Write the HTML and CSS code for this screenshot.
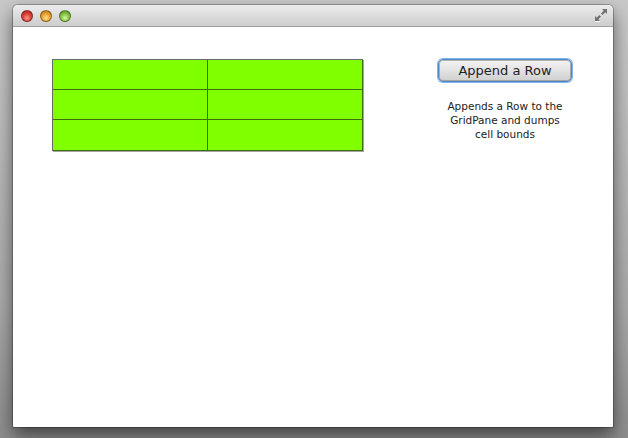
FILE: index.html
```html
<!DOCTYPE html>
<html>
<head>
<meta charset="utf-8">
<link rel="stylesheet" href="styles.css">
</head>
<body>
<div class="window">
  <div class="titlebar">
    <div class="lights">
      <span class="light red"></span>
      <span class="light yellow"></span>
      <span class="light green"></span>
    </div>
    <svg class="resize" width="14" height="14" viewBox="0 0 14 14">
      <path d="M8 1 H13 V6 L11.3 4.3 L8.6 7 L7 5.4 L9.7 2.7 Z" fill="#707070"/>
      <path d="M6 13 H1 V8 L2.7 9.7 L5.4 7 L7 8.6 L4.3 11.3 Z" fill="#707070"/>
      <line x1="1" y1="13.5" x2="6" y2="13.5" stroke="#fff" stroke-width="1"/>
    </svg>
  </div>
  <div class="content">
    <div class="grid">
      <div class="cell"></div><div class="cell"></div>
      <div class="cell"></div><div class="cell"></div>
      <div class="cell"></div><div class="cell"></div>
    </div>
    <div class="side">
      <button class="btn">Append a Row</button>
      <p class="desc">Appends a Row to the GridPane and dumps cell bounds</p>
    </div>
  </div>
</div>
</body>
</html>
```

FILE: styles.css
```css
html, body {
  margin: 0;
  padding: 0;
}
body {
  width: 628px;
  height: 438px;
  overflow: hidden;
  background: linear-gradient(180deg, #c9c9c9 0%, #a9a9a9 70%, #8c8c8c 100%);
  font-family: "DejaVu Sans", "Liberation Sans", sans-serif;
  padding-top: 5px;
  box-sizing: border-box;
}
.window {
  margin-left: 13px;
  width: 600px;
  height: 422px;
  background: #fff;
  border-radius: 5px 5px 1px 1px;
  box-shadow: 0 8px 18px rgba(0, 0, 0, 0.55), 0 0 0 1px rgba(0, 0, 0, 0.25);
  overflow: hidden;
}
.titlebar {
  height: 22px;
  background: linear-gradient(180deg, #ececec 0%, #dcdcdc 50%, #cdcdcd 100%);
  border-bottom: 1px solid #a0a0a0;
  display: flex;
  align-items: center;
  justify-content: space-between;
  padding: 0 5px 0 8px;
  box-sizing: border-box;
}
.lights {
  display: flex;
  gap: 7px;
}
.light {
  width: 12px;
  height: 12px;
  border-radius: 50%;
  box-sizing: border-box;
  border: 1px solid rgba(0, 0, 0, 0.35);
}
.red {
  background: radial-gradient(circle at 50% 70%, #ff9a8a 0%, #e0443a 45%, #a8201a 100%);
}
.yellow {
  background: radial-gradient(circle at 50% 70%, #ffe48a 0%, #e8a534 45%, #b06e10 100%);
}
.green {
  background: radial-gradient(circle at 50% 70%, #d6f5a0 0%, #8cc64c 45%, #4f8a22 100%);
}
.resize {
  margin-top: -2px;
}
.content {
  display: flex;
  align-items: flex-start;
  padding: 32px 0 0 39px;
}
.grid {
  display: grid;
  grid-template-columns: 155px 155px;
  grid-template-rows: 30px 30px 31px;
  border-left: 1px solid #6a6a6a;
  border-top: 1px solid #6a6a6a;
  background: #7fff00;
  box-shadow: 1px 1px 0 rgba(0, 0, 0, 0.35);
}
.cell {
  border-right: 1px solid #3d6e10;
  border-bottom: 1px solid #3d6e10;
  box-sizing: border-box;
  background: #7fff00;
}
.side {
  margin-left: 75px;
  width: 134px;
  display: flex;
  flex-direction: column;
  align-items: center;
}
.btn {
  width: 134px;
  height: 23px;
  margin: 0;
  padding: 0;
  font-family: "DejaVu Sans", "Liberation Sans", sans-serif;
  font-size: 13px;
  color: #222;
  border: 1px solid #4f86c6;
  border-radius: 5px;
  background: linear-gradient(180deg, #f4f4f4 0%, #e2e2e2 50%, #cfcfcf 100%);
  box-shadow: 0 0 0 1px #7fb6ea, inset 0 0 0 1px rgba(120, 120, 120, 0.5);
}
.desc {
  margin: 17px 0 0;
  width: 126px;
  text-align: center;
  font-size: 10.5px;
  line-height: 14px;
  color: #222;
}
```
